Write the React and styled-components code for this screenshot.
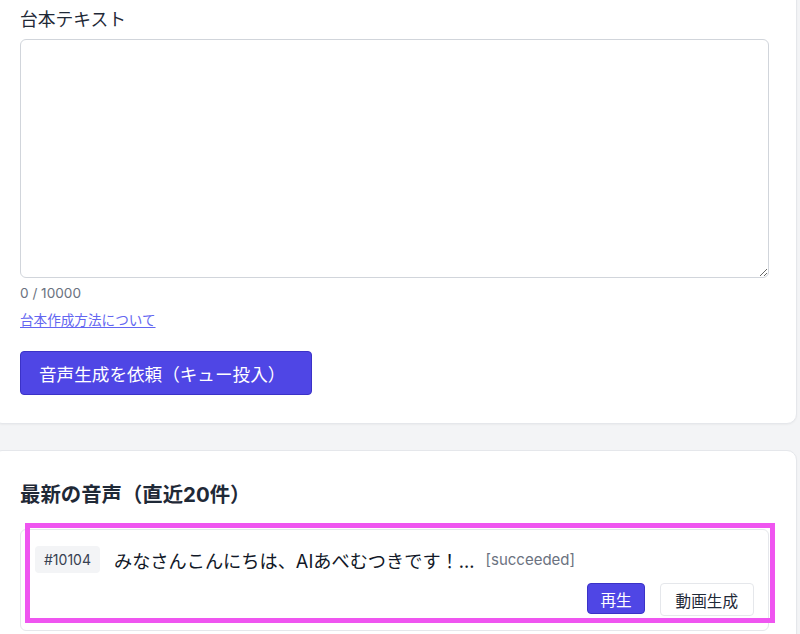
import React from "react";
import styled, { createGlobalStyle } from "styled-components";

const GlobalStyle = createGlobalStyle`
  html, body {
    margin: 0;
    padding: 0;
    background: #f3f4f6;
    overflow: hidden;
  }
  body {
    font-family: Inter, "Noto Sans CJK JP", sans-serif;
    color: #111827;
  }
  * {
    box-sizing: border-box;
  }
`;

const Page = styled.div`
  width: 805px;
  margin-left: -8px;
  display: flex;
  flex-direction: column;
  gap: 26px;
`;

const Card = styled.section`
  background: #ffffff;
  border: 1px solid #e5e7eb;
  border-radius: 10px;
  box-shadow: 0 1px 2px rgba(0, 0, 0, 0.04);
  padding: ${(p) => p.$pad};
  margin-top: ${(p) => p.$mt || "0"};
`;

const Label = styled.label`
  display: block;
  font-size: 17.8px;
  line-height: 24px;
  color: #1f2937;
  margin-bottom: 7px;
`;

const TextArea = styled.textarea`
  display: block;
  width: 100%;
  height: 239px;
  border: 1px solid #d1d5db;
  border-radius: 6px;
  padding: 10px 12px;
  font-family: inherit;
  font-size: 16px;
  background: #fff;
  outline: none;
`;

const Counter = styled.div`
  margin-top: 5px;
  font-size: 13.6px;
  line-height: 20px;
  color: #6b7280;
`;

const HelpLink = styled.a`
  display: inline-block;
  margin-top: 7px;
  font-size: 13.6px;
  line-height: 20px;
  color: #6366f1;
  text-decoration: underline;
  text-underline-offset: 2px;
`;

const SubmitButton = styled.button`
  display: block;
  margin-top: 21px;
  width: 292px;
  height: 44px;
  background: #4f46e5;
  border: 1px solid #3b32c7;
  border-radius: 4px;
  color: #ffffff;
  font-family: inherit;
  font-size: 17.6px;
  text-align: left;
  padding: 0 0 0 18px;
  cursor: pointer;
`;

const Heading = styled.h2`
  margin: 0 0 21px;
  font-size: 20.4px;
  line-height: 27px;
  font-weight: 700;
  color: #1f2937;
`;

const Item = styled.div`
  position: relative;
  border: 1px solid #e5e7eb;
  border-radius: 6px;
  padding: 16px 14px 14px;
  display: flex;
  flex-direction: column;
  gap: 10px;
`;

const Highlight = styled.div`
  position: absolute;
  left: 4px;
  top: -7px;
  width: 750px;
  height: 100px;
  border: 5px solid #ef55f0;
  pointer-events: none;
`;

const InfoRow = styled.div`
  display: flex;
  align-items: center;
  gap: 14px;
`;

const IdTag = styled.span`
  display: inline-flex;
  align-items: center;
  height: 27px;
  padding: 0 9px;
  background: #f3f4f6;
  border-radius: 4px;
  font-size: 14px;
  color: #374151;
`;

const Snippet = styled.span`
  font-size: 18.2px;
  color: #111827;
`;

const Status = styled.span`
  font-size: 15px;
  color: #6b7280;
  margin-left: -3px;
`;

const Actions = styled.div`
  display: flex;
  justify-content: flex-end;
  gap: 15px;
`;

const ActionButton = styled.button`
  height: ${(p) => (p.$primary ? "31px" : "33px")};
  padding: 0 ${(p) => (p.$primary ? "12px" : "15px")};
  border-radius: 4px;
  font-family: inherit;
  font-size: 15.6px;
  background: ${(p) => (p.$primary ? "#4f46e5" : "#ffffff")};
  color: ${(p) => (p.$primary ? "#ffffff" : "#1f2937")};
  border: 1px solid ${(p) => (p.$primary ? "#3b32c7" : "#e5e7eb")};
  cursor: pointer;
`;

export default function App() {
  return (
    <>
      <GlobalStyle />
      <Page>
        <Card $pad="28px 27px 28px" $mt="-21px">
          <Label>台本テキスト</Label>
          <TextArea />
          <Counter>0 / 10000</Counter>
          <HelpLink href="#">台本作成方法について</HelpLink>
          <SubmitButton>音声生成を依頼（キュー投入）</SubmitButton>
        </Card>
        <Card $pad="30px 27px 40px">
          <Heading>最新の音声（直近20件）</Heading>
          <Item>
            <Highlight />
            <InfoRow>
              <IdTag>#10104</IdTag>
              <Snippet>みなさんこんにちは、AIあべむつきです！...</Snippet>
              <Status>[succeeded]</Status>
            </InfoRow>
            <Actions>
              <ActionButton $primary>再生</ActionButton>
              <ActionButton>動画生成</ActionButton>
            </Actions>
          </Item>
        </Card>
      </Page>
    </>
  );
}
